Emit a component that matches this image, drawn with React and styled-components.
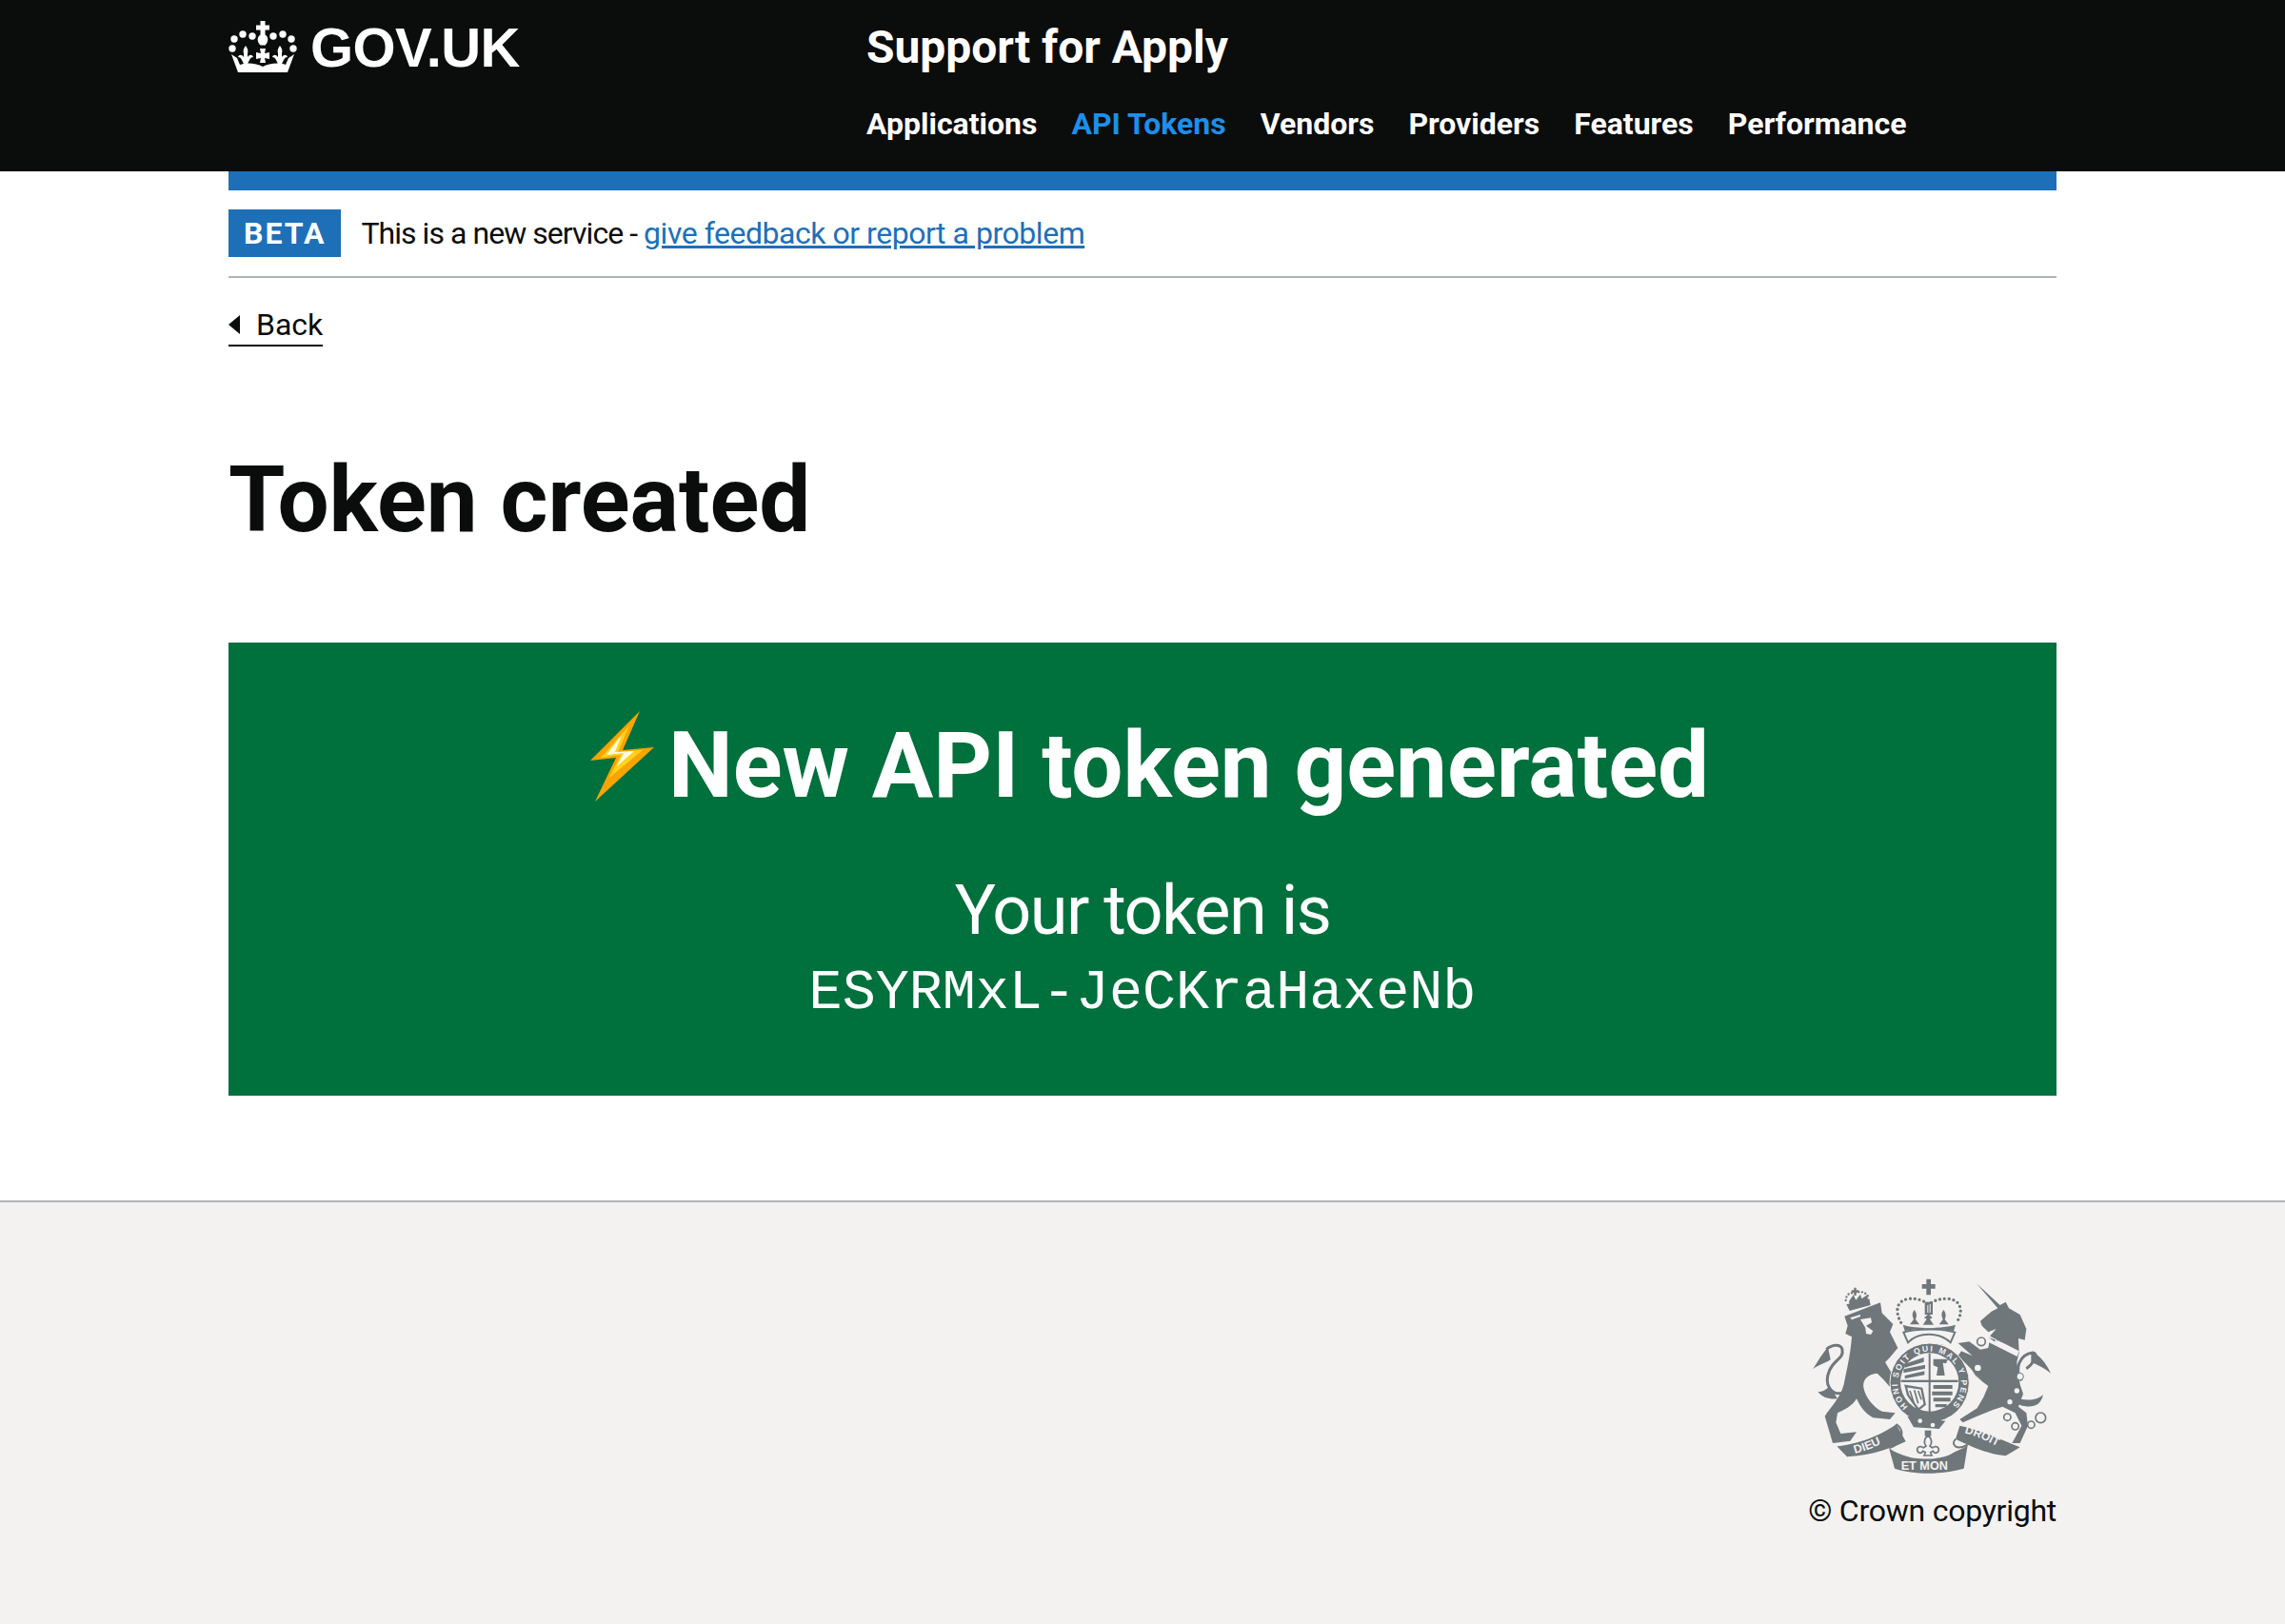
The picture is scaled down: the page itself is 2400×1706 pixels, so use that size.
import React from "react";
import styled, { createGlobalStyle } from "styled-components";

const FONT = `Roboto, "Noto Sans", Arial, sans-serif`;
const Global = createGlobalStyle`
  html, body { margin: 0; padding: 0; background: #fff; }
  body { font-family: ${FONT}; color: #0b0c0c; }
  * { box-sizing: border-box; }
`;
const Wrap = styled.div`width: 1920px; margin: 0 auto;`;
const Header = styled.header`background: #0b0c0c; height: 180px; color: #fff;`;
const HeaderInner = styled(Wrap)`display: flex;`;
const Logo = styled.div`width: 670px; display: flex; align-items: center; height: 98px; gap: 14px; font-weight: 700; font-size: 58px; letter-spacing: -0.6px; font-family: "Liberation Sans", Arial, sans-serif;`;
const Service = styled.div`display: flex; flex-direction: column;`;
const ServiceName = styled.div`font-weight: 700; font-size: 48px; height: 100px; line-height: 100px; letter-spacing: -0.05px;`;
const Nav = styled.nav`display: flex; gap: 36px; margin-top: 8px;`;
const NavItem = styled.a`font-weight: 700; font-size: 32px; line-height: 44px; color: ${p => p.$active ? "#1d8feb" : "#fff"};`;
const BlueBar = styled(Wrap)`height: 20px; background: #1d70b8;`;
const Phase = styled(Wrap)`height: 92px; border-bottom: 2px solid #b1b4b6; display: flex; align-items: center; gap: 21px;`;
const Tag = styled.strong`background: #1d70b8; color: #fff; font-size: 32px; line-height: 50px; height: 50px; padding: 0 16px; letter-spacing: 2px;`;
const PhaseText = styled.span`font-size: 32px; letter-spacing: -0.95px;`;
const Link = styled.a`color: #1d70b8; text-decoration: underline; letter-spacing: -0.47px;`;
const BackRow = styled(Wrap)`margin-top: 28px; display: flex;`;
const Back = styled.a`display: flex; align-items: center; gap: 17px; font-size: 32px; line-height: 42px; border-bottom: 2px solid #0b0c0c;`;
const Arrow = styled.span`width: 0; height: 0; border-style: solid; border-width: 10px 12px 10px 0; border-color: transparent #0b0c0c transparent transparent;`;
const Title = styled.h1`margin: 111px 0 0; font-size: 96px; line-height: 100px; font-weight: 700;`;
const Panel = styled.section`margin-top: 100px; background: #00703c; color: #fff; height: 476px; text-align: center; padding-top: 79px;`;
const PanelTitle = styled.h2`margin: 0; padding-left: 15px; font-size: 96px; line-height: 100px; font-weight: 700; display: flex; justify-content: center; align-items: center; gap: 14px;`;
const BoltBox = styled.svg`align-self: flex-start; margin-top: -7px;`;
const PanelBody = styled.div`font-size: 72px; line-height: 80px; margin-top: 63px; letter-spacing: -1.5px;`;
const Token = styled.div`font-family: "Liberation Mono", monospace; font-size: 58.4px; line-height: 70px; margin-top: 12px;`;
const Footer = styled.footer`margin-top: 110px; height: 446px; background: #f3f2f1; border-top: 2px solid #b1b4b6;`;
const FooterInner = styled(Wrap)`display: flex; flex-direction: column; align-items: flex-end; padding-top: 78px;`;
const Copyright = styled.div`font-size: 32px; line-height: 40px; margin-top: 16px; letter-spacing: -0.25px;`;

const Fleur = ({ x = 0 }) => (
  <path transform={`translate(${x} 0)`} d="M18 26c2 3 3 5 2 8v4c2-3 5-3 6 0-2 0-3 1-4 3l-2 4h-4l-2-4c-1-2-2-3-4-3 1-3 4-3 6 0v-4c-1-3 0-5 2-8z" />
);
const Crown = () => (
  <svg width="72" height="54" viewBox="0 0 72 54" fill="#fff">
    <path d="M33.500 0h5v4.500H43v5h-4.500v5c3.500 2 4 7 0 11h-5c-4-4-3.500-9 0-11v-5H29v-5h4.500z" />
    {[[15, 14], [25, 16], [47, 16], [57, 14], [6, 19], [66, 19], [4, 29], [68, 29]].map(([x, y], i) => (
      <circle key={i} cx={x} cy={y} r="3.700" />
    ))}
    <Fleur /><Fleur x={36} />
    <path d="M33 29h6l-1 5 5-1v7l-5-1 1 5h-6l1-5-5 1v-7l5 1z" />
    <path d="M3 35l6 4 3 7c8-3 18-1 24 2 6-3 16-5 24-2l3-7 6-4-7 19H10z" />
  </svg>
);

const L = "#6f777b";
const BG = "#f3f2f1";
const Crest = () => (
  <svg width="260" height="210" viewBox="60 60 780 630" fill={L}>
    <defs>
      <path id="garterRing" d="M372 470A100 100 0 1 1 512 465" />
      <path id="ribL" d="M205 618C255 605 300 585 345 550" />
      <path id="ribR" d="M550 553C600 565 640 590 690 612" />
    </defs>
    {/* lion */}
    <path d="M172 185L285 142L290 175L325 210L315 235L340 285L315 315L300 330L345 405L330 425L295 385L275 365C245 368 228 385 232 410C238 440 262 470 290 485L332 490L315 510L262 505C235 490 222 470 210 445C195 470 170 480 150 490L145 520L160 555L210 550L190 578L135 585L110 500C130 470 160 440 170 400C180 350 190 310 195 250L175 240L182 215Z" />
    <path d="M175 425C130 440 105 400 125 355C140 320 170 320 165 290C160 270 130 275 115 290" fill="none" stroke={L} strokeWidth="9" />
    <path d="M120 283C100 305 90 325 72 352C95 335 110 335 128 322ZM125 405C110 420 100 425 88 422C100 440 125 448 150 445Z" />
    <path d="M222 195L255 190L258 205L240 215L262 232L255 243L240 240L238 222ZM190 190L222 180L222 186L195 196Z" fill={BG} />
    <path d="M178 148L250 130L254 150L188 168Z" />
    <path d="M176 135Q178 108 205 112Q235 100 250 128" fill="none" stroke={L} strokeWidth="7" strokeDasharray="0 11" strokeLinecap="round" />
    <path d="M202 95h7v8h8v7h-8v10h-7v-10h-8v-7h8z" />
    <path d="M186 138L200 118L208 134L222 116L226 130L244 118L246 138L190 154Z" />
    {/* unicorn */}
    <path d="M588 82L662 150L680 140L690 160L725 180L745 225L740 260L720 255L722 300L715 330L725 400L735 430L720 470L745 490L750 530L725 585L700 585L730 530L710 490L670 470L640 480L590 500L545 520L535 510L590 475L610 440L625 405L605 390L575 360L600 390L570 350L530 310L540 295L575 310L530 270L565 265L600 290L625 285L632 245L650 225L625 235L605 215L600 200L635 170L655 160Z" />
    <path d="M730 388C705 350 725 305 765 300C790 305 760 340 745 350" fill="none" stroke={L} strokeWidth="9" />
    <path d="M760 298C785 305 805 330 822 365C805 350 785 340 760 330ZM700 440C735 450 775 455 798 432C790 470 760 475 725 465Z" />
    <path d="M628 247L722 295L716 312L622 265Z" fill={BG} />
    <path d="M640 262l6 4v-8l6 4v-6l8 8v-8l6 6 6 4v-6l8 6v-6l8 8 6 4 6-4 6 12-80-28z" />
    <circle cx="715" cy="420" r="8" fill={BG} /><circle cx="693" cy="455" r="8" fill={BG} /><circle cx="725" cy="375" r="11" fill={BG} stroke={L} strokeWidth="3" />
    <circle cx="603" cy="265" r="13" fill={BG} stroke={L} strokeWidth="5" />
    <circle cx="592" cy="348" r="12" fill={BG} stroke={L} strokeWidth="4" />
    <g fill="none" stroke={L} strokeWidth="5">
      <circle cx="685" cy="503" r="11" /><circle cx="710" cy="532" r="11" /><circle cx="760" cy="527" r="11" /><circle cx="790" cy="505" r="16" />
    </g>
    {/* royal crown */}
    <path d="M430 68h14v16h14v14h-14v20h-14V98h-14V84h14z" />
    <rect x="425" y="140" width="25" height="40" />
    <rect x="433" y="146" width="3" height="28" fill={BG} /><rect x="440" y="146" width="3" height="28" fill={BG} />
    <path d="M350 205C330 170 335 135 375 130C405 128 425 138 437 148C450 138 470 128 500 130C540 135 548 170 525 205" fill="none" stroke={L} strokeWidth="10" strokeDasharray="0 14.500" strokeLinecap="round" />
    <path d="M392 165c9 12 8 20 4 30l12 16h-30l12-16c-4-10-7-18 2-30zM484 165c9 12 8 20 4 30l12 16h-30l12-16c-4-10-7-18 2-30zM437 178l12 12-8 4 12 18h-34l12-18-8-4z" />
    <path d="M356 212C395 225 480 225 522 212L516 232C480 222 395 222 362 232Z" />
    <path d="M358 236C395 223 482 223 520 236L506 268C470 234 405 234 372 268Z" fill="none" stroke={L} strokeWidth="6" />
    {/* garter */}
    <circle cx="440" cy="395" r="125" stroke={BG} strokeWidth="3" />
    <path d="M370 500L490 515L470 540L390 535Z" />
    <circle cx="410" cy="515" r="7" fill={BG} /><circle cx="450" cy="528" r="7" fill={BG} />
    <text fontFamily="'Liberation Sans', sans-serif" fontWeight="700" fontSize="26" fill={BG}>
      <textPath href="#garterRing" textLength="495" lengthAdjust="spacing">HONI SOIT QUI MAL Y PENSE</textPath>
    </text>
    <circle cx="440" cy="393" r="92" fill={BG} />
    {/* quarters */}
    <rect x="350" y="386" width="180" height="7" />
    <rect x="437" y="302" width="6" height="190" />
    <path d="M362 335l60-20v14l-60 18zM358 352l68-14v12l-68 14zM362 372l62-14v12l-62 12z" />
    <path d="M452 320h46l-6 14-10-2 6 40h-26l4-26-14-6z" />
    <path d="M452 402h60v12h-60zM448 422h64v12h-64zM452 442h54v12h-54zM458 462h36v10h-36z" />
    <path d="M365 405l50 8 10 50-20 16-18-24-15-22z" fill="none" stroke={L} strokeWidth="7" />
    <path d="M378 420l12 36M392 418l12 42M404 420l10 28" stroke={L} strokeWidth="5" fill="none" />
    {/* ribbons */}
    <path d="M148 595C210 590 290 560 335 525L365 580C300 610 240 625 180 628Z" />
    <path d="M535 530C590 540 660 570 725 598L680 625C620 620 560 590 522 572Z" />
    <path d="M312 600C325 612 345 618 360 624C400 640 480 638 510 618C530 606 545 604 560 592L548 665C480 685 390 685 330 665Z" />
    <path d="M335 525C370 550 345 590 315 600M522 572C505 590 525 610 560 590" fill="none" stroke={L} strokeWidth="6" />
    <text fontFamily="'Liberation Sans', sans-serif" fontWeight="700" fontSize="37" fill={BG}><textPath href="#ribL">DIEU</textPath></text>
    <text fontFamily="'Liberation Sans', sans-serif" fontWeight="700" fontSize="36" fill={BG}><textPath href="#ribR">DROIT</textPath></text>
    <text x="350" y="668" fontFamily="'Liberation Sans', sans-serif" fontWeight="700" fontSize="38" fill={BG}>ET MON</text>
    <path d="M435 560c12 12 14 24 6 34l8 6c8-8 20-4 20 6 0 10-14 14-18 4l-8 4 4 10h-24l4-10-8-4c-4 10-18 6-18-4s12-14 20-6l8-6c-8-10-6-22 6-34z" fill="none" stroke={L} strokeWidth="5" />
    <rect x="425" y="545" width="20" height="18" />
  </svg>
);

const Bolt = () => (
  <BoltBox width="68" height="96" viewBox="0 0 68 96">
    <path d="M52 0L0 52L27 49L5 95L67 38L34 41Z" fill="#f9a400" />
    <path d="M41 15L11 49L32 46L20 70L55 41L29 43Z" fill="#ffd21f" />
    <path d="M33 25L17 46L35 44L28 58L46 42L26 43Z" fill="#fffbe0" />
  </BoltBox>
);

export default function App() {
  return (
    <>
      <Global />
      <Header>
        <HeaderInner>
          <Logo><Crown />GOV.UK</Logo>
          <Service>
            <ServiceName>Support for Apply</ServiceName>
            <Nav>
              <NavItem>Applications</NavItem>
              <NavItem $active>API Tokens</NavItem>
              <NavItem>Vendors</NavItem>
              <NavItem>Providers</NavItem>
              <NavItem>Features</NavItem>
              <NavItem>Performance</NavItem>
            </Nav>
          </Service>
        </HeaderInner>
      </Header>
      <BlueBar />
      <Phase>
        <Tag>BETA</Tag>
        <PhaseText>This is a new service - <Link>give feedback or report a problem</Link></PhaseText>
      </Phase>
      <BackRow><Back><Arrow />Back</Back></BackRow>
      <Wrap>
        <Title>Token created</Title>
        <Panel>
          <PanelTitle><Bolt />New API token generated</PanelTitle>
          <PanelBody>Your token is</PanelBody>
          <Token>ESYRMxL-JeCKraHaxeNb</Token>
        </Panel>
      </Wrap>
      <Footer>
        <FooterInner>
          <Crest />
          <Copyright>© Crown copyright</Copyright>
        </FooterInner>
      </Footer>
    </>
  );
}
